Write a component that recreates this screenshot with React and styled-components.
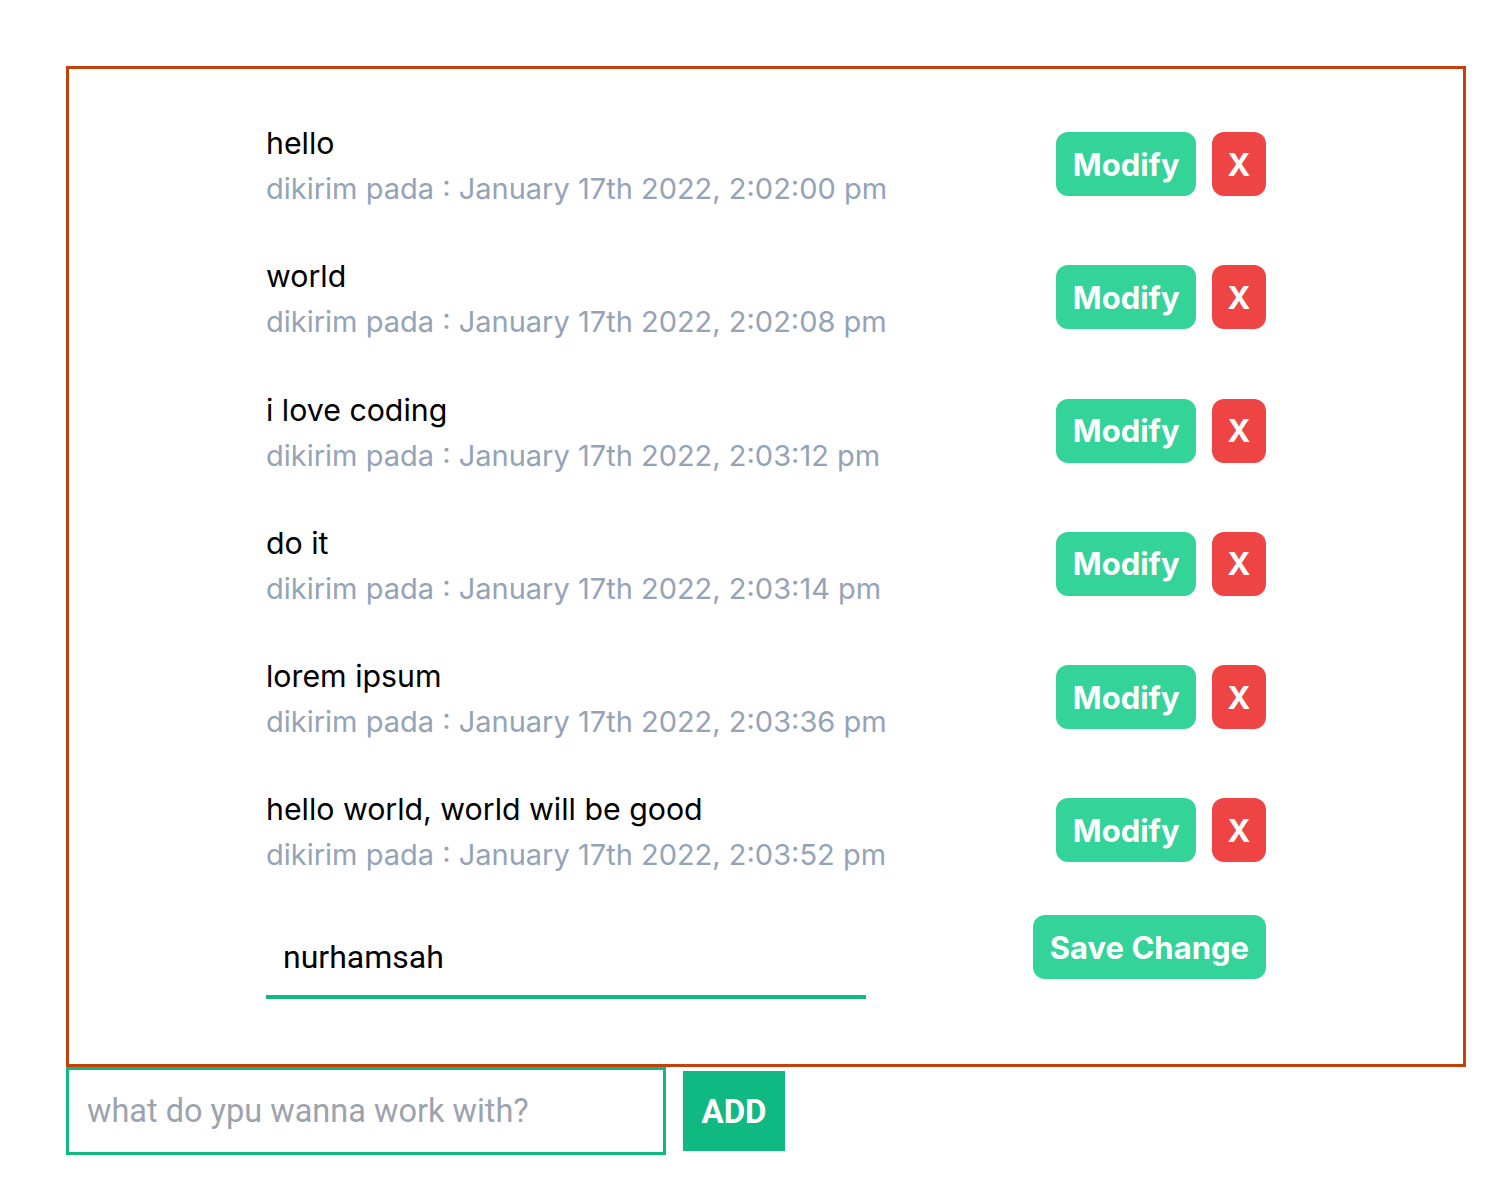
import React from "react";
import styled, { createGlobalStyle } from "styled-components";

const Global = createGlobalStyle`
  html, body { margin: 0; padding: 0; background: #fff; }
  body { font-family: Inter, "Noto Sans", sans-serif; }
  * { box-sizing: border-box; }
`;

const Page = styled.div`
  padding: 66px 0 0 66px;
`;

const Board = styled.section`
  width: 1400px;
  border: 3px solid #c2410c;
  padding: 51px 197px 65px;
  display: flex;
  flex-direction: column;
`;

const List = styled.ul`
  list-style: none;
  margin: 0;
  padding: 0;
  display: flex;
  flex-direction: column;
  gap: 41.3px;
`;

const Row = styled.li`
  display: flex;
  align-items: center;
  justify-content: space-between;
`;

const TextCol = styled.div`
  display: flex;
  flex-direction: column;
`;

const Title = styled.span`
  font-size: 30.3px;
  line-height: 46px;
  color: #000;
`;

const Meta = styled.span`
  font-size: 29px;
  line-height: 46px;
  color: #94a3b8;
`;

const Actions = styled.div`
  display: flex;
  gap: 16px;
  margin-top: -4px;
`;

const Btn = styled.button`
  height: 64px;
  border: none;
  border-radius: 12px;
  padding: 0 ${(p) => p.$px}px;
  background: ${(p) => (p.$danger ? "#ef4444" : "#34d399")};
  color: #fff;
  font-family: Inter, "Noto Sans", sans-serif;
  font-weight: 700;
  font-size: 31px;
  cursor: pointer;
`;

const EditRow = styled.form`
  margin-top: 37px;
  display: flex;
  align-items: flex-start;
  justify-content: space-between;
`;

const EditInput = styled.input`
  width: 600px;
  height: 84px;
  border: none;
  border-bottom: 4px solid #10b981;
  padding: 4px 17px 0;
  font-family: Roboto, "Liberation Sans", sans-serif;
  font-size: 32px;
  color: #000;
  outline: none;
  caret-color: #000;
`;

const AddForm = styled.form`
  display: flex;
  align-items: center;
  gap: 17px;
`;

const AddInput = styled.input`
  width: 600px;
  height: 88px;
  border: 3px solid #10b981;
  padding: 0 18px;
  font-family: Roboto, "Liberation Sans", sans-serif;
  font-size: 32.5px;
  outline: none;
  &::placeholder { color: #9ca3af; }
`;

const AddBtn = styled.button`
  height: 80px;
  width: 102px;
  border: none;
  background: #10b981;
  color: #fff;
  font-family: Roboto, "Liberation Sans", sans-serif;
  font-weight: 700;
  font-size: 33px;
`;

const todos = [
  ["hello", "January 17th 2022, 2:02:00 pm"],
  ["world", "January 17th 2022, 2:02:08 pm"],
  ["i love coding", "January 17th 2022, 2:03:12 pm"],
  ["do it", "January 17th 2022, 2:03:14 pm"],
  ["lorem ipsum", "January 17th 2022, 2:03:36 pm"],
  ["hello world, world will be good", "January 17th 2022, 2:03:52 pm"],
];

export default function App() {
  return (
    <Page>
      <Global />
      <Board>
        <List>
          {todos.map(([t, d]) => (
            <Row key={t}>
              <TextCol>
                <Title>{t}</Title>
                <Meta>dikirim pada : {d}</Meta>
              </TextCol>
              <Actions>
                <Btn $px={16.5}>Modify</Btn>
                <Btn $px={15.5} $danger>X</Btn>
              </Actions>
            </Row>
          ))}
        </List>
        <EditRow onSubmit={(e) => e.preventDefault()}>
          <EditInput defaultValue="nurhamsah" autoFocus />
          <Btn $px={17}>Save Change</Btn>
        </EditRow>
      </Board>
      <AddForm onSubmit={(e) => e.preventDefault()}>
        <AddInput placeholder="what do ypu wanna work with?" />
        <AddBtn>ADD</AddBtn>
      </AddForm>
    </Page>
  );
}
